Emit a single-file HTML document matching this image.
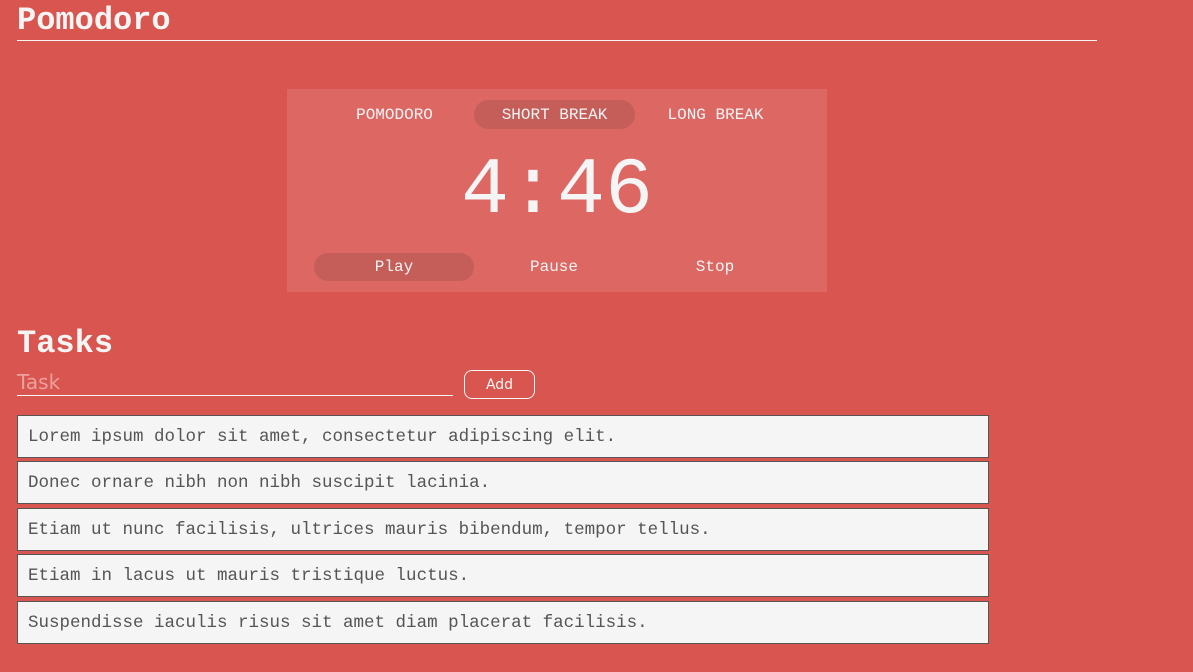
<!DOCTYPE html>
<html><head><style>
body{margin:0;background:#d95550;width:1193px;height:672px;overflow:hidden;font-family:"Liberation Mono",monospace;color:#f5f5f5;position:relative}
.a{position:absolute}
h1{position:absolute;margin:0;left:17px;top:1px;font-size:32px;font-weight:bold;line-height:40px}
.line{left:17px;top:40px;width:1080px;height:1px;background:#f5f5f5}
.card{left:287px;top:89px;width:540px;height:203px;background:#dd6763}
.tab{top:101px;height:29px;width:161px;line-height:29px;text-align:center;font-size:16px;border-radius:15px}
.tab.pill{top:100px;line-height:31px}
.btn{top:253px;height:28px;width:160px;line-height:28px;text-align:center;font-size:16px;border-radius:14px}
.pill{background:#c55d59}
.time{left:287px;width:540px;top:142px;text-align:center;font-size:80px;line-height:100px}
h2{position:absolute;margin:0;left:17px;top:324px;font-size:32px;font-weight:bold;line-height:40px}
.inp{left:17px;top:368px;width:436px;height:27px;border-bottom:1px solid #f5f5f5;font-family:"DejaVu Sans",sans-serif;font-size:20px;color:#eba19e;line-height:28px}
.add{left:464px;top:370px;width:69px;height:27px;border:1px solid #f5f5f5;border-radius:8px;font-family:"DejaVu Sans",sans-serif;font-size:14px;text-align:center;line-height:29px}
.t{left:17px;border:1px solid #555;background:#f5f5f5;color:#555;font-size:17.5px;line-height:42px;padding-left:10px;box-sizing:border-box;width:972px;height:43px}
</style></head><body>
<h1>Pomodoro</h1><div class="a line"></div>
<div class="a card"></div>
<div class="a tab" style="left:314px">POMODORO</div>
<div class="a tab pill" style="left:474px">SHORT BREAK</div>
<div class="a tab" style="left:635px">LONG BREAK</div>
<div class="a time">4:46</div>
<div class="a btn pill" style="left:314px">Play</div>
<div class="a btn" style="left:474px">Pause</div>
<div class="a btn" style="left:635px">Stop</div>
<h2>Tasks</h2>
<div class="a inp">Task</div>
<div class="a add">Add</div>
<div class="a t" style="top:415px">Lorem ipsum dolor sit amet, consectetur adipiscing elit.</div>
<div class="a t" style="top:461px">Donec ornare nibh non nibh suscipit lacinia.</div>
<div class="a t" style="top:508px">Etiam ut nunc facilisis, ultrices mauris bibendum, tempor tellus.</div>
<div class="a t" style="top:554px">Etiam in lacus ut mauris tristique luctus.</div>
<div class="a t" style="top:601px">Suspendisse iaculis risus sit amet diam placerat facilisis.</div>
</body></html>
